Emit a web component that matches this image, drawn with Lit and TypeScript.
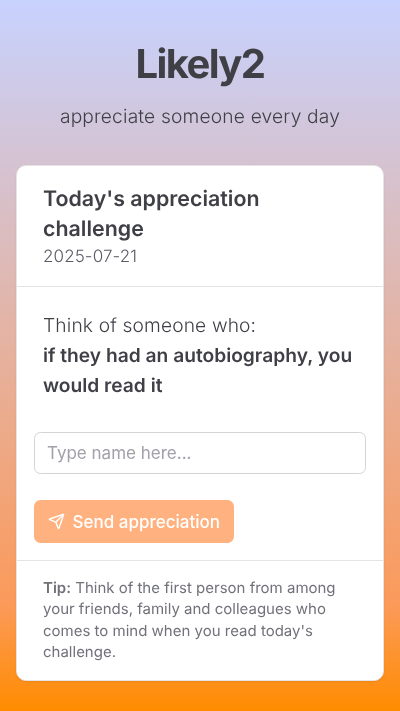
import { LitElement, html, css } from "lit";
import { customElement } from "lit/decorators.js";

@customElement("app-root")
export class AppRoot extends LitElement {
  static styles = css`
    :host {
      display: block;
      min-height: 711px;
      box-sizing: border-box;
      font-family: Inter, "Liberation Sans", sans-serif;
      text-rendering: geometricPrecision;
      color: #3f3f46;
      background: linear-gradient(to bottom, #c7d2fe 0%, #fb9a5a 85%, #ff8c00 100%);
      padding: 39px 16px 30px;
    }
    .head { display: flex; flex-direction: column; align-items: center; margin-bottom: 35px; will-change: transform; }
    h1 { margin: 0 0 13px; font-size: 40px; line-height: 50px; font-weight: 700; letter-spacing: -1.6px; }
    .sub { margin: 0; font-size: 19.2px; line-height: 28px; font-weight: 300; letter-spacing: 0.17px; color: #3f3f46; }
    .card {
      background: #fff;
      border: 1px solid #e4e4e7;
      border-radius: 10px;
      box-shadow: 0 1px 2px rgba(0,0,0,.08);
      overflow: hidden;
      will-change: transform;
    }
    .top { padding: 18px 26px 17px; border-bottom: 1px solid #e4e4e7; }
    h2 { margin: 0; font-size: 21.4px; line-height: 30px; font-weight: 600; }
    .date { font-size: 17px; line-height: 24px; font-weight: 300; letter-spacing: 0.1px; color: #5c5c66; margin-top: 1px; }
    .prompt { padding: 23px 26px 0; font-size: 19.2px; line-height: 30px; font-weight: 300; letter-spacing: 0.14px; }
    .prompt b { font-weight: 600; display: block; letter-spacing: 0; }
    .form { padding: 32px 17px 17px; display: flex; flex-direction: column; align-items: flex-start; gap: 26px; }
    input {
      width: 100%;
      box-sizing: border-box;
      height: 42px;
      border: 1px solid #d4d4d8;
      border-radius: 6.5px;
      padding: 0 12px;
      font: inherit;
      font-weight: 400;
      font-size: 17px;
      outline: none;
      background: #fff;
    }
    input::placeholder { color: #a1a1aa; opacity: 1; }
    button {
      display: flex;
      align-items: center;
      gap: 8px;
      height: 43px;
      padding: 0 14px 0 13.5px;
      border: 0;
      border-radius: 6.5px;
      background: #ffb27f;
      color: #fff;
      font: inherit;
      font-size: 17px;
      font-weight: 500;
    }
    button svg { display: block; }
    .tip {
      border-top: 1px solid #e4e4e7;
      padding: 16px 26px 18px;
      font-size: 15px;
      line-height: 21.3px;
      color: #71717a;
    }
    .tip b { font-weight: 600; }
  `;

  render() {
    return html`
      <header class="head">
        <h1>Likely2</h1>
        <p class="sub">appreciate someone every day</p>
      </header>
      <section class="card">
        <div class="top">
          <h2>Today's appreciation challenge</h2>
          <div class="date">2025-07-21</div>
        </div>
        <div class="prompt">
          Think of someone who:
          <b>if they had an autobiography, you would read it</b>
        </div>
        <div class="form">
          <input placeholder="Type name here..." />
          <button>
            <svg width="17" height="17" viewBox="0 0 24 24" fill="none" stroke="currentColor" stroke-width="2" stroke-linecap="round" stroke-linejoin="round">
              <path d="M14.536 21.686a.5.5 0 0 0 .937-.024l6.5-19a.496.496 0 0 0-.635-.635l-19 6.5a.5.5 0 0 0-.024.937l7.93 3.18a2 2 0 0 1 1.112 1.11z"></path>
              <path d="m21.854 2.147-10.94 10.939"></path>
            </svg>
            Send appreciation
          </button>
        </div>
        <div class="tip"><b>Tip:</b> Think of the first person from among your friends, family and colleagues who comes to mind when you read today's challenge.</div>
      </section>
    `;
  }
}
